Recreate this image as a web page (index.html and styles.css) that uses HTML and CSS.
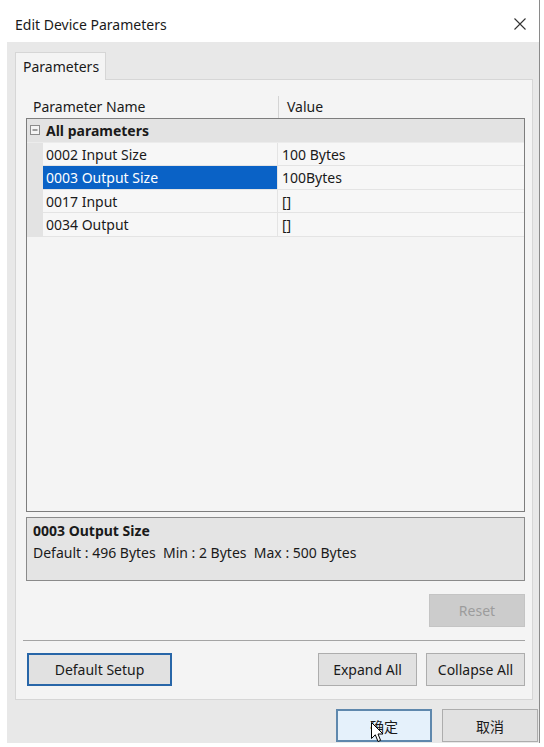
FILE: index.html
```html
<!DOCTYPE html>
<html lang="en">
<head>
    <meta charset="UTF-8">
    <title>Edit Device Parameters</title>
    <link rel="stylesheet" href="styles.css">
</head>
<body>
    <div class="dialog">
        <div class="title-bar">
            <span class="title">Edit Device Parameters</span>
            <svg class="close-icon" width="12" height="12" viewBox="0 0 12 12">
                <path d="M0.5 0.5 L11.5 11.5 M11.5 0.5 L0.5 11.5" stroke="#333" stroke-width="1.1" fill="none"/>
            </svg>
        </div>

        <div class="dialog-body">
            <div class="tab-strip">
                <div class="tab">Parameters</div>
            </div>

            <div class="tab-panel">
                <!-- Property grid -->
                <div class="grid-header">
                    <div class="col-name">Parameter Name</div>
                    <div class="col-value">Value</div>
                </div>
                <div class="grid-box">
                    <div class="category-row">
                        <svg class="toggle" width="10" height="10" viewBox="0 0 10 10">
                            <rect x="0.5" y="0.5" width="9" height="9" fill="#f4f4f4" stroke="#8c8c8c"/>
                            <path d="M2.5 5 H7.5" stroke="#444" stroke-width="1"/>
                        </svg>
                        <span>All parameters</span>
                    </div>
                    <div class="param-row">
                        <div class="gutter"></div>
                        <div class="cell-name">0002 Input Size</div>
                        <div class="cell-value">100 Bytes</div>
                    </div>
                    <div class="param-row selected">
                        <div class="gutter"></div>
                        <div class="cell-name">0003 Output Size</div>
                        <div class="cell-value">100Bytes</div>
                    </div>
                    <div class="param-row">
                        <div class="gutter"></div>
                        <div class="cell-name">0017 Input</div>
                        <div class="cell-value">[]</div>
                    </div>
                    <div class="param-row">
                        <div class="gutter"></div>
                        <div class="cell-name">0034 Output</div>
                        <div class="cell-value">[]</div>
                    </div>
                </div>

                <!-- Description -->
                <div class="desc-box">
                    <div class="desc-title">0003 Output Size</div>
                    <div class="desc-text">Default : 496 Bytes&nbsp; Min : 2 Bytes&nbsp; Max : 500 Bytes</div>
                </div>

                <div class="reset-row">
                    <button class="btn btn-disabled reset-btn">Reset</button>
                </div>

                <div class="separator"></div>

                <div class="action-row">
                    <button class="btn btn-focus default-btn">Default Setup</button>
                    <div class="action-right">
                        <button class="btn expand-btn">Expand All</button>
                        <button class="btn collapse-btn">Collapse All</button>
                    </div>
                </div>
            </div>

            <div class="footer">
                <button class="btn btn-hover footer-btn">确定</button>
                <button class="btn footer-btn">取消</button>
            </div>
        </div>

        <!-- mouse pointer over the OK button -->
        <svg class="cursor" width="13" height="21" viewBox="0 0 13 21">
            <path d="M0.5 0.5 L0.5 16.5 L4.3 12.8 L7 19.5 L9.6 18.4 L7 12 L12 12 Z" fill="#fff" stroke="#000" stroke-width="1" stroke-linejoin="round"/>
        </svg>
    </div>
</body>
</html>
```

FILE: styles.css
```css
body {
    margin: 0;
    padding: 0;
    background: #fff;
    font-family: 'Noto Sans', 'Noto Sans CJK SC', sans-serif;
    font-size: 14px;
    color: #1a1a1a;
}

.dialog {
    position: relative;
    width: 533px;
    height: 743px;
    margin-left: 7px;
    background: #e8e8e8;
    border-right: 1px solid #8a8a8a;
    box-sizing: border-box;
}

.title-bar {
    height: 42px;
    background: #fff;
    display: flex;
    align-items: center;
    justify-content: space-between;
    padding: 6px 13px 0 8px;
    box-sizing: border-box;
}

.title {
    font-size: 14px;
}

.dialog-body {
    padding: 10px 6px 0 8px;
}

.tab-strip {
    display: flex;
}

.tab {
    width: 91px;
    height: 28px;
    box-sizing: border-box;
    padding: 4px 0 0 7px;
    background: #f4f4f4;
    border: 1px solid #d6d6d6;
    border-bottom: none;
    margin-bottom: -1px;
    position: relative;
    z-index: 1;
}

.tab-panel {
    height: 621px;
    box-sizing: border-box;
    background: #f4f4f4;
    border: 1px solid #d6d6d6;
    padding: 16px 7px 13px 10px;
    display: flex;
    flex-direction: column;
}

.grid-header {
    height: 22px;
    display: flex;
    align-items: center;
}

.col-name {
    width: 252px;
    padding-left: 7px;
    box-sizing: border-box;
}

.col-value {
    height: 100%;
    display: flex;
    align-items: center;
    padding-left: 8px;
    border-left: 1px solid #d4d4d4;
}

.grid-box {
    height: 395px;
    box-sizing: border-box;
    border: 1px solid #7d7d7d;
    background: #f4f4f4;
}

.category-row {
    height: 24px;
    display: flex;
    align-items: center;
    background: #e3e3e3;
    font-weight: bold;
    border-bottom: 1px solid #ececec;
    box-sizing: border-box;
}

.toggle {
    margin: 0 6px 0 3px;
}

.param-row {
    height: 23.5px;
    display: flex;
    box-sizing: border-box;
}

.gutter {
    width: 16px;
    background: #e3e3e3;
}

.cell-name,
.cell-value {
    display: flex;
    align-items: center;
    border-bottom: 1px solid #e4e4e4;
    background: #f7f7f7;
    box-sizing: border-box;
}

.cell-name {
    width: 235px;
    padding-left: 3px;
    border-right: 1px solid #e4e4e4;
}

.cell-value {
    flex: 1;
    padding-left: 4px;
}

.param-row.selected .cell-name {
    background: #0a62c6;
    color: #fff;
}

.desc-box {
    margin-top: 5px;
    height: 64px;
    box-sizing: border-box;
    border: 1px solid #8a8a8a;
    background: #e4e4e4;
    padding: 3px 6px;
}

.desc-title {
    font-weight: bold;
    height: 22px;
}

.reset-row {
    margin-top: 13px;
    display: flex;
    justify-content: flex-end;
}

.btn {
    font-family: 'Noto Sans', 'Noto Sans CJK SC', sans-serif;
    font-size: 14px;
    color: #1a1a1a;
    background: #e1e1e1;
    border: 1px solid #adadad;
    padding: 0;
    box-sizing: border-box;
}

.btn-disabled {
    background: #cccccc;
    border-color: #c4c4c4;
    color: #9c9c9c;
}

.btn-focus {
    border: 2px solid #2866a8;
}

.btn-hover {
    background: #e5f1fb;
    border: 2px solid #5f88ad;
}

.reset-btn {
    width: 96px;
    height: 33px;
}

.separator {
    margin-top: 13px;
    height: 1px;
    background: #a4a4a4;
    margin-left: -3px;
}

.action-row {
    margin-top: 12px;
    display: flex;
    justify-content: space-between;
}

.action-right {
    display: flex;
    gap: 9px;
}

.default-btn {
    width: 145px;
    height: 33px;
    margin-left: 1px;
}

.expand-btn,
.collapse-btn {
    width: 99px;
    height: 33px;
}

.footer {
    margin-top: 9px;
    display: flex;
    justify-content: flex-end;
    gap: 10px;
    margin-right: -5px;
}

.footer-btn {
    width: 96px;
    height: 33px;
}

.cursor {
    position: absolute;
    left: 364px;
    top: 722px;
}
```
